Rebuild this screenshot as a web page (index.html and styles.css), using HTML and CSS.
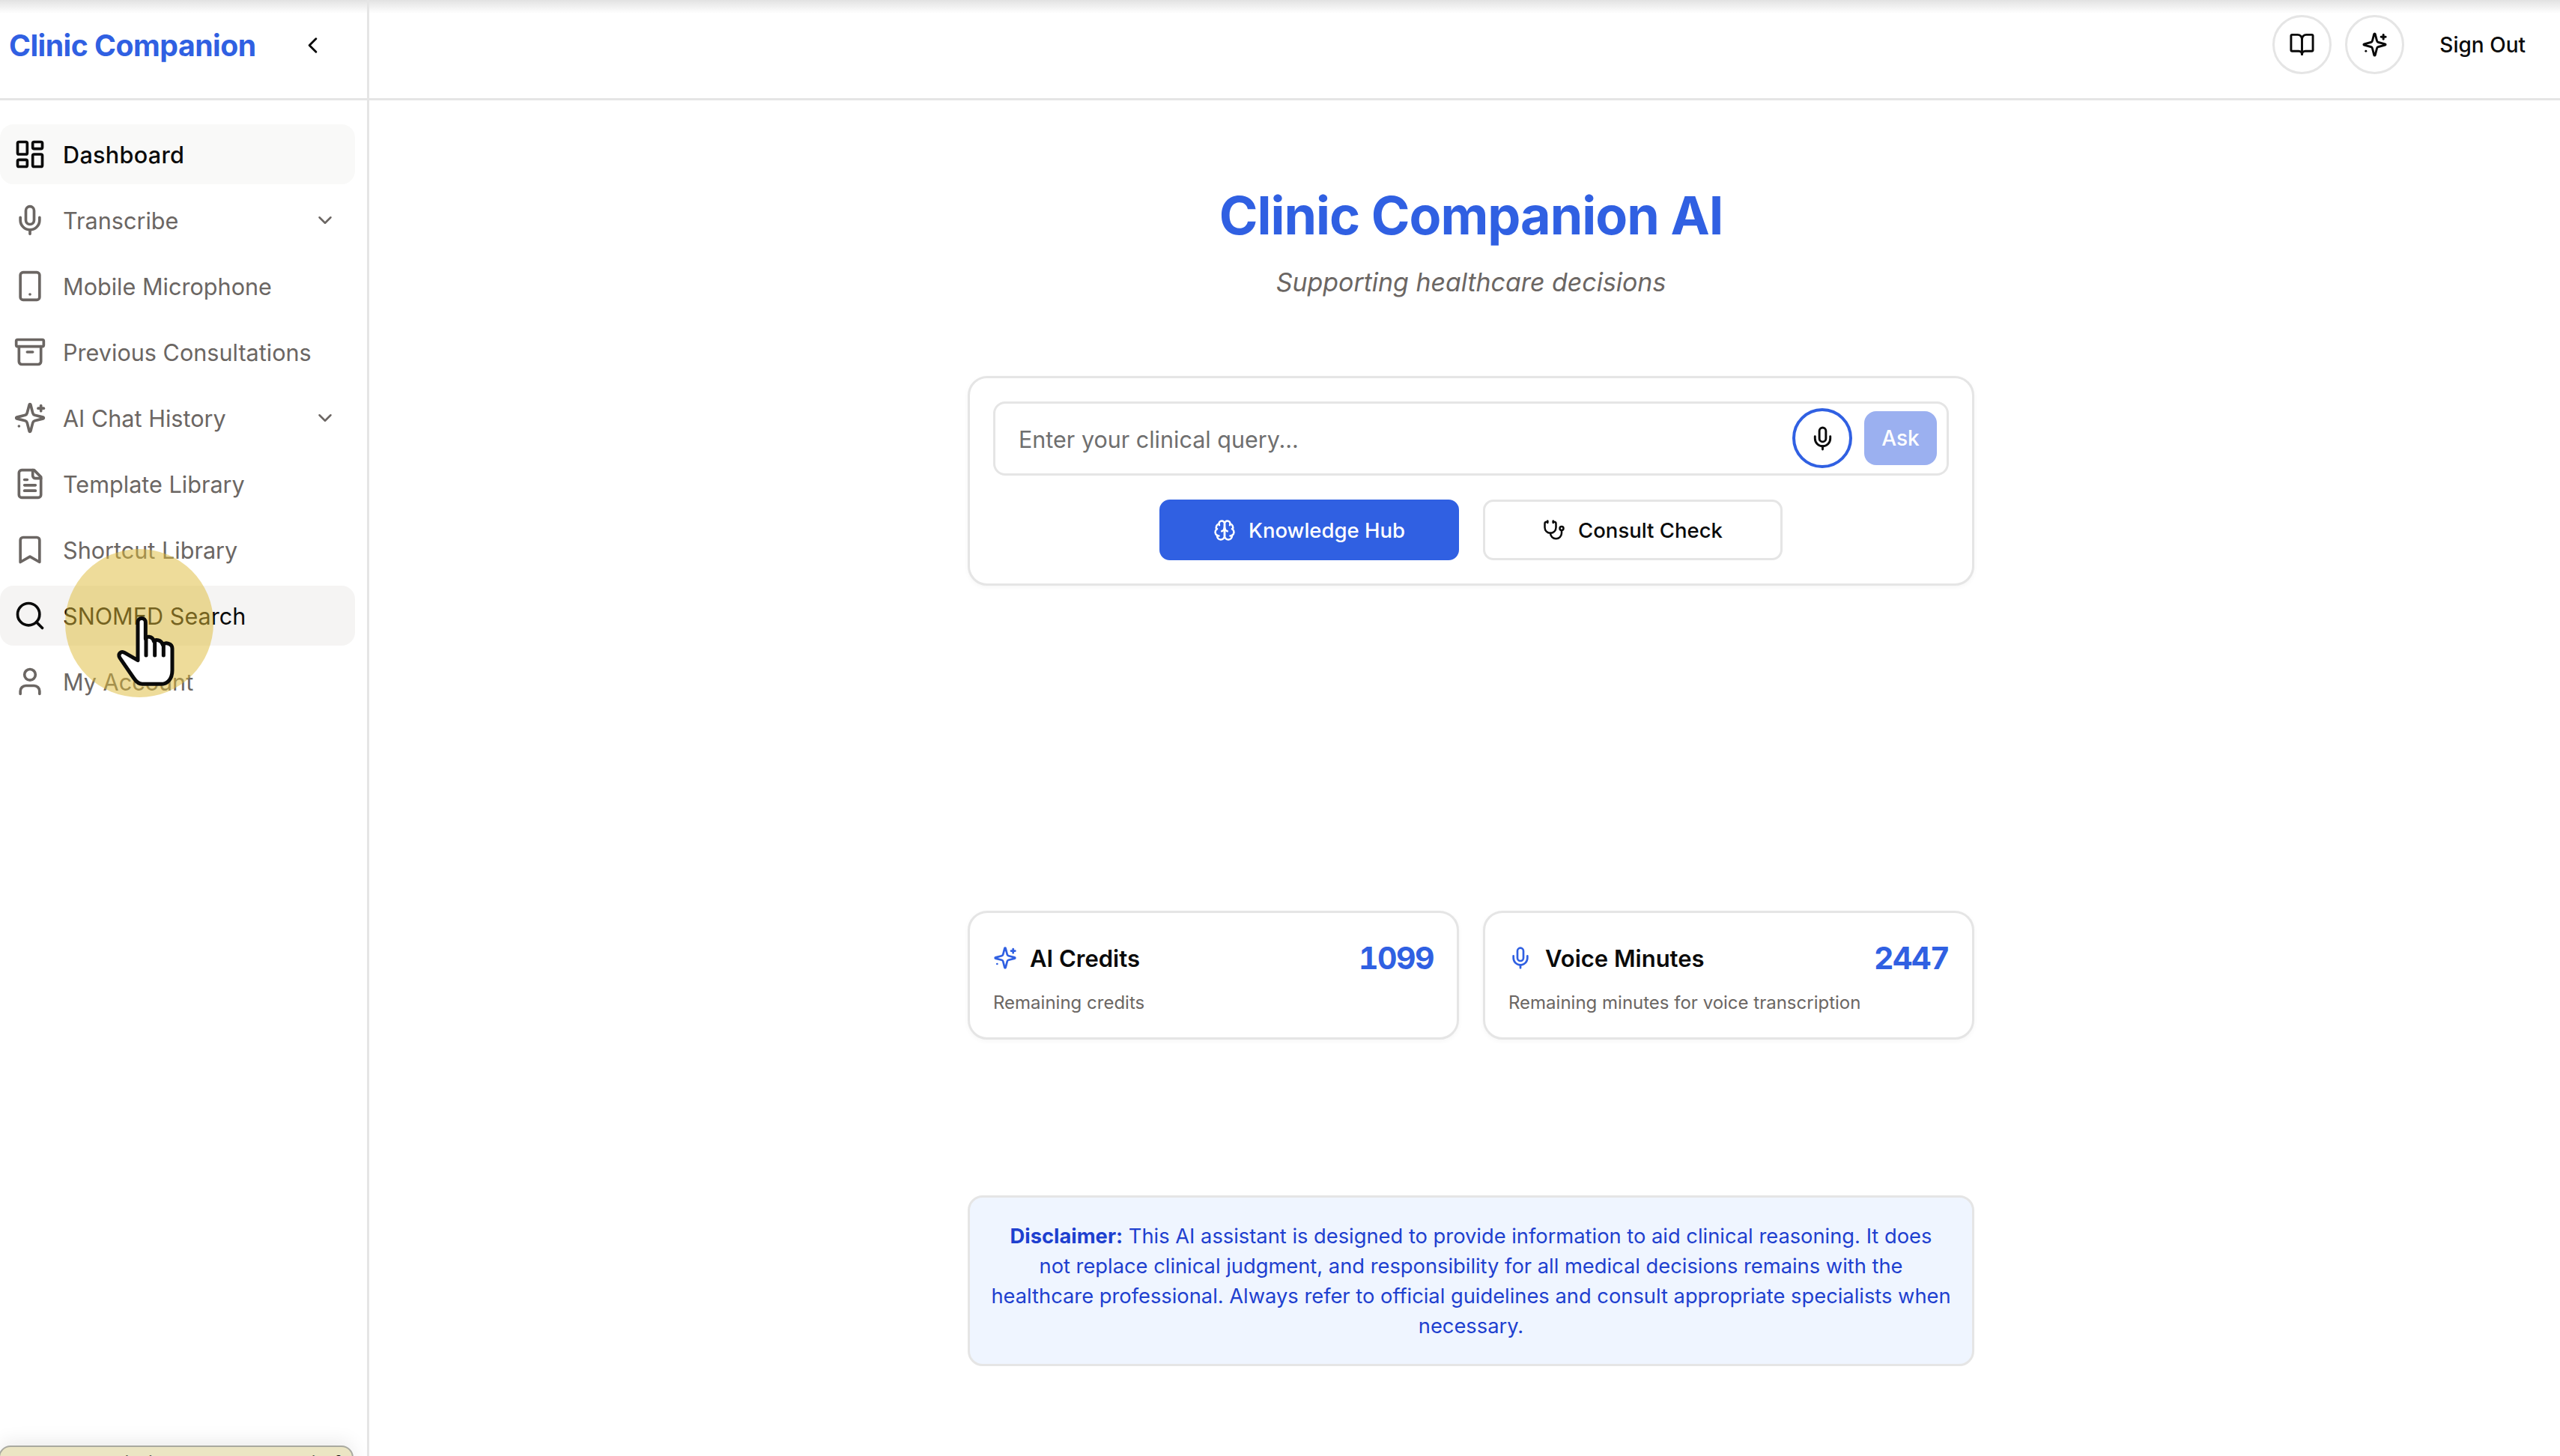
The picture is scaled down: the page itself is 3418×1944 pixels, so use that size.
FILE: index.html
```html
<!DOCTYPE html>
<html lang="en">

<head>
    <meta charset="UTF-8" />
    <meta name="viewport" content="width=device-width, initial-scale=1" />
    <title>Clinic Companion</title>
    <link rel="stylesheet" href="styles.css">
</head>

<body>
    <svg class="sprite" xmlns="http://www.w3.org/2000/svg">
        <symbol id="i-grid" viewBox="0 0 24 24"><rect x="3" y="3" width="7" height="9" rx="1"/><rect x="14" y="3" width="7" height="5" rx="1"/><rect x="14" y="12" width="7" height="9" rx="1"/><rect x="3" y="16" width="7" height="5" rx="1"/></symbol>
        <symbol id="i-mic" viewBox="0 0 24 24"><path d="M12 2a3 3 0 0 0-3 3v7a3 3 0 0 0 6 0V5a3 3 0 0 0-3-3Z"/><path d="M19 10v2a7 7 0 0 1-14 0v-2"/><path d="M12 19v3"/></symbol>
        <symbol id="i-tablet" viewBox="0 0 24 24"><rect x="5" y="2" width="14" height="20" rx="2"/><path d="M12 18h.01"/></symbol>
        <symbol id="i-archive" viewBox="0 0 24 24"><rect x="2" y="3" width="20" height="5" rx="1"/><path d="M4 8v11a2 2 0 0 0 2 2h12a2 2 0 0 0 2-2V8"/><path d="M10 12h4"/></symbol>
        <symbol id="i-sparkles" viewBox="0 0 24 24"><path d="M9.937 15.5A2 2 0 0 0 8.5 14.063l-6.135-1.582a.5.5 0 0 1 0-.962L8.5 9.936A2 2 0 0 0 9.937 8.5l1.582-6.135a.5.5 0 0 1 .963 0L14.063 8.5A2 2 0 0 0 15.5 9.937l6.135 1.581a.5.5 0 0 1 0 .964L15.5 14.063a2 2 0 0 0-1.437 1.437l-1.582 6.135a.5.5 0 0 1-.963 0z"/><path d="M20 3v4"/><path d="M22 5h-4"/><path d="M4 18h.01"/></symbol>
        <symbol id="i-file" viewBox="0 0 24 24"><path d="M15 2H6a2 2 0 0 0-2 2v16a2 2 0 0 0 2 2h12a2 2 0 0 0 2-2V7Z"/><path d="M14 2v4a2 2 0 0 0 2 2h4"/><path d="M10 9H8"/><path d="M16 13H8"/><path d="M16 17H8"/></symbol>
        <symbol id="i-bookmark" viewBox="0 0 24 24"><path d="m19 21-7-4-7 4V5a2 2 0 0 1 2-2h10a2 2 0 0 1 2 2v16z"/></symbol>
        <symbol id="i-search" viewBox="0 0 24 24"><circle cx="11" cy="11" r="8"/><path d="m21 21-4.3-4.3"/></symbol>
        <symbol id="i-user" viewBox="0 0 24 24"><path d="M19 21v-2a4 4 0 0 0-4-4H9a4 4 0 0 0-4 4v2"/><circle cx="12" cy="7" r="4"/></symbol>
        <symbol id="i-down" viewBox="0 0 24 24"><path d="m6 9 6 6 6-6"/></symbol>
        <symbol id="i-left" viewBox="0 0 24 24"><path d="m15 18-6-6 6-6"/></symbol>
        <symbol id="i-book" viewBox="0 0 24 24"><path d="M12 7v14"/><path d="M3 18a1 1 0 0 1-1-1V4a1 1 0 0 1 1-1h5a4 4 0 0 1 4 4 4 4 0 0 1 4-4h5a1 1 0 0 1 1 1v13a1 1 0 0 1-1 1h-6a3 3 0 0 0-3 3 3 3 0 0 0-3-3z"/></symbol>
        <symbol id="i-brain" viewBox="0 0 24 24"><path d="M12 5a3 3 0 1 0-5.997.125 4 4 0 0 0-2.526 5.77 4 4 0 0 0 .556 6.588A4 4 0 1 0 12 18Z"/><path d="M12 5a3 3 0 1 1 5.997.125 4 4 0 0 1 2.526 5.77 4 4 0 0 1-.556 6.588A4 4 0 1 1 12 18Z"/><path d="M15 13a4.5 4.5 0 0 1-3-4 4.5 4.5 0 0 1-3 4"/><path d="M17.599 6.5a3 3 0 0 0 .399-1.375"/><path d="M6.003 5.125A3 3 0 0 0 6.401 6.5"/><path d="M3.477 10.896a4 4 0 0 1 .585-.396"/><path d="M19.938 10.5a4 4 0 0 1 .585.396"/><path d="M6 18a4 4 0 0 1-1.967-.516"/><path d="M19.967 17.484A4 4 0 0 1 18 18"/></symbol>
        <symbol id="i-steth" viewBox="0 0 24 24"><path d="M11 2v2"/><path d="M5 2v2"/><path d="M5 3H4a2 2 0 0 0-2 2v4a6 6 0 0 0 12 0V5a2 2 0 0 0-2-2h-1"/><path d="M8 15a6 6 0 0 0 12 0v-3"/><circle cx="20" cy="10" r="2"/></symbol>
    </svg>

    <div class="top-shade"></div>

    <div class="app">
        <aside class="sidebar">
            <div class="sidebar-head">
                <span class="logo">Clinic Companion</span>
                <svg class="icon collapse"><use href="#i-left"/></svg>
            </div>
            <nav class="nav">
                <a class="nav-item soft"><svg class="icon"><use href="#i-grid"/></svg>Dashboard</a>
                <a class="nav-item"><svg class="icon"><use href="#i-mic"/></svg>Transcribe<svg class="icon caret"><use href="#i-down"/></svg></a>
                <a class="nav-item"><svg class="icon"><use href="#i-tablet"/></svg>Mobile Microphone</a>
                <a class="nav-item"><svg class="icon"><use href="#i-archive"/></svg>Previous Consultations</a>
                <a class="nav-item"><svg class="icon"><use href="#i-sparkles"/></svg>AI Chat History<svg class="icon caret"><use href="#i-down"/></svg></a>
                <a class="nav-item"><svg class="icon"><use href="#i-file"/></svg>Template Library</a>
                <a class="nav-item"><svg class="icon"><use href="#i-bookmark"/></svg>Shortcut Library</a>
                <a class="nav-item hover"><svg class="icon"><use href="#i-search"/></svg>SNOMED Search</a>
                <a class="nav-item"><svg class="icon"><use href="#i-user"/></svg>My Account</a>
            </nav>
            <div class="toast">You have limited access to this feature</div>
        </aside>

        <div class="content">
            <header class="topbar">
                <button class="round-btn"><svg class="icon small"><use href="#i-book"/></svg></button>
                <button class="round-btn"><svg class="icon small"><use href="#i-sparkles"/></svg></button>
                <button class="signout">Sign Out</button>
            </header>

            <main class="main">
                <h1>Clinic Companion AI</h1>
                <p class="tagline">Supporting healthcare decisions</p>

                <section class="card query">
                    <div class="query-box">
                        <span class="placeholder">Enter your clinical query...</span>
                        <button class="mic-btn"><svg class="icon small"><use href="#i-mic"/></svg></button>
                        <button class="ask-btn">Ask</button>
                    </div>
                    <div class="query-actions">
                        <button class="action primary"><svg class="icon small"><use href="#i-brain"/></svg>Knowledge Hub</button>
                        <button class="action"><svg class="icon small"><use href="#i-steth"/></svg>Consult Check</button>
                    </div>
                </section>

                <section class="stats">
                    <div class="card stat">
                        <div class="stat-top">
                            <svg class="icon small blue"><use href="#i-sparkles"/></svg>
                            <span class="stat-name">AI Credits</span>
                            <span class="stat-num">1099</span>
                        </div>
                        <div class="stat-note">Remaining credits</div>
                    </div>
                    <div class="card stat">
                        <div class="stat-top">
                            <svg class="icon small blue"><use href="#i-mic"/></svg>
                            <span class="stat-name">Voice Minutes</span>
                            <span class="stat-num">2447</span>
                        </div>
                        <div class="stat-note">Remaining minutes for voice transcription</div>
                    </div>
                </section>

                <section class="disclaimer">
                    <strong>Disclaimer:</strong> This AI assistant is designed to provide information to aid clinical reasoning. It does<br>not replace clinical judgment, and responsibility for all medical decisions remains with the healthcare professional. Always refer to official guidelines and consult appropriate specialists when necessary.
                </section>
            </main>
        </div>
    </div>

    <!-- click marker from the screen recording -->
    <div class="click-dot"></div>
    <svg class="hand" viewBox="0 0 330 345">
        <path d="M132 62a15.5 15.5 0 0 1 31 0V128C163 118 190 115 196 138C203 130 226 132 232 152C242 142 270 146 270 168V255C270 290 250 310 225 310H150C135 310 125 300 115 285L60 205C50 190 65 175 80 185L132 215Z"/>
        <path d="M165 130V195"/>
        <path d="M200 140V195"/>
        <path d="M235 155V195"/>
    </svg>
</body>

</html>
```

FILE: styles.css
```css
:root {
    --blue: #3060e2;
    --border: #e5e5e5;
    --text: #0a0a0a;
    --muted: #6b6663;
}

* {
    box-sizing: border-box;
}

html,
body {
    height: 100%;
}

body {
    margin: 0;
    overflow: hidden;
    font-family: Inter, "Liberation Sans", sans-serif;
    color: var(--text);
    background-color: #fff;
}

button {
    font-family: inherit;
    cursor: pointer;
}

.sprite {
    display: none;
}

.icon {
    width: 44px;
    height: 44px;
    flex-shrink: 0;
    fill: none;
    stroke: currentColor;
    stroke-width: 2;
    stroke-linecap: round;
    stroke-linejoin: round;
}

.icon.small {
    width: 35px;
    height: 35px;
}

.icon.blue {
    color: var(--blue);
}

.top-shade {
    position: absolute;
    top: 0;
    left: 0;
    right: 0;
    height: 18px;
    background: linear-gradient(#e2e2e2, rgba(255, 255, 255, 0));
}

.app {
    display: flex;
    height: 100%;
}

/* sidebar */
.sidebar {
    position: relative;
    width: 493px;
    flex-shrink: 0;
    border-right: 3px solid var(--border);
    overflow: hidden;
}

.sidebar-head {
    display: flex;
    align-items: center;
    height: 134px;
    padding: 0 0 10px 12px;
    border-bottom: 3px solid var(--border);
}

.logo {
    width: 388px;
    font-size: 39.2px;
    font-weight: 700;
    letter-spacing: -0.5px;
    color: var(--blue);
}

.collapse {
    width: 35px;
    height: 35px;
}

.nav {
    padding: 32px 0 0;
}

.nav-item {
    display: flex;
    align-items: center;
    gap: 22px;
    width: 474px;
    height: 80px;
    margin-bottom: 8px;
    padding-left: 18px;
    border-radius: 18px;
    font-size: 30.6px;
    color: var(--muted);
}

.nav-item .icon {
    width: 44px;
    height: 44px;
}

.nav-item.soft {
    background-color: #f9f9f8;
    color: var(--text);
    font-weight: 500;
    letter-spacing: 0.3px;
}

.nav-item.hover {
    background-color: #f5f4f3;
    color: var(--text);
}

.nav-item .caret {
    width: 30px;
    height: 30px;
    margin-left: auto;
    margin-right: 25px;
}

.toast {
    position: absolute;
    left: -2px;
    top: 1930px;
    width: 474px;
    height: 70px;
    padding: 6px 30px;
    background-color: #ebe5c3;
    border: 2px solid #a9a9a0;
    border-radius: 16px;
    box-shadow: 0 -6px 24px rgba(0, 0, 0, 0.08);
    font-size: 28px;
    white-space: nowrap;
    overflow: hidden;
}

/* top bar */
.content {
    flex: 1;
    min-width: 0;
}

.topbar {
    display: flex;
    align-items: center;
    justify-content: flex-end;
    gap: 18px;
    height: 134px;
    padding: 0 46px 13px 0;
    border-bottom: 3px solid var(--border);
}

.round-btn {
    display: flex;
    align-items: center;
    justify-content: center;
    width: 79px;
    height: 79px;
    padding: 0;
    background: #fff;
    border: 3px solid var(--border);
    border-radius: 50%;
    color: var(--text);
}

.signout {
    margin: 2px 0 0 29px;
    padding: 0;
    background: none;
    border: none;
    font-size: 28px;
    font-weight: 500;
    color: var(--text);
}

/* main column */
.main {
    width: 1344px;
    margin-left: 799px;
}

h1 {
    margin: 104px 0 0;
    text-align: center;
    font-size: 70px;
    line-height: 100px;
    font-weight: 700;
    letter-spacing: -1px;
    color: var(--blue);
}

.tagline {
    margin: 14px 0 0;
    text-align: center;
    font-size: 33.9px;
    line-height: 50px;
    font-style: italic;
    color: var(--muted);
}

.card {
    background-color: #fff;
    border: 3px solid var(--border);
    border-radius: 26px;
    box-shadow: 0 2px 6px rgba(0, 0, 0, 0.04);
}

.query {
    height: 280px;
    margin-top: 100px;
    padding: 31px 31px 0;
}

.query-box {
    display: flex;
    align-items: center;
    height: 99px;
    padding: 0 13px 1px 31px;
    border: 3px solid var(--border);
    border-radius: 16px;
}

.placeholder {
    flex: 1;
    margin-top: 2px;
    font-size: 30.5px;
    color: #6f6f6f;
}

.mic-btn {
    display: flex;
    align-items: center;
    justify-content: center;
    width: 80px;
    height: 80px;
    margin-right: 16px;
    padding: 0;
    background: #fff;
    border: 4px solid var(--blue);
    border-radius: 50%;
    color: var(--text);
}

.ask-btn {
    width: 97px;
    height: 72px;
    padding: 0;
    background-color: #9bb0f0;
    border: none;
    border-radius: 16px;
    font-size: 28px;
    font-weight: 500;
    color: #fff;
}

.query-actions {
    display: flex;
    justify-content: center;
    gap: 32px;
    margin-top: 32px;
}

.action {
    display: flex;
    align-items: center;
    justify-content: center;
    gap: 17px;
    width: 400px;
    height: 81px;
    padding: 0;
    background: #fff;
    border: 3px solid var(--border);
    border-radius: 14px;
    font-size: 27.5px;
    font-weight: 500;
    color: var(--text);
}

.action .icon {
    width: 30px;
    height: 30px;
}

.action.primary {
    background-color: var(--blue);
    border-color: var(--blue);
    color: #fff;
}

.stats {
    display: grid;
    grid-template-columns: 1fr 1fr;
    gap: 32px;
    margin-top: 434px;
}

.stat {
    height: 172px;
    padding: 28px 31px 0;
}

.stat-top {
    display: flex;
    align-items: center;
    height: 64px;
}

.stat-top .icon {
    width: 32px;
    height: 32px;
}

.stat-name {
    margin-left: 17px;
    font-size: 31px;
    font-weight: 600;
}

.stat-num {
    margin-left: auto;
    font-size: 41px;
    font-weight: 700;
    letter-spacing: -1.5px;
    font-variant-numeric: tabular-nums;
    color: var(--blue);
}

.stat-note {
    margin-top: 13px;
    font-size: 24px;
    color: var(--muted);
}

.disclaimer {
    height: 228px;
    margin-top: 208px;
    padding: 32px 27px;
    background-color: #eff5ff;
    border: 3px solid var(--border);
    border-radius: 20px;
    text-align: center;
    font-size: 27.3px;
    line-height: 40px;
    color: #1e40cf;
}

/* click marker */
.click-dot {
    position: absolute;
    left: 87px;
    top: 733px;
    width: 198px;
    height: 198px;
    border-radius: 50%;
    background-color: rgba(221, 185, 53, 0.5);
}

.hand {
    position: absolute;
    left: 140px;
    top: 810px;
    width: 110px;
    height: 115px;
    fill: #fff;
    stroke: #0a0a0a;
    stroke-width: 15;
    stroke-linecap: round;
    stroke-linejoin: round;
}
```
